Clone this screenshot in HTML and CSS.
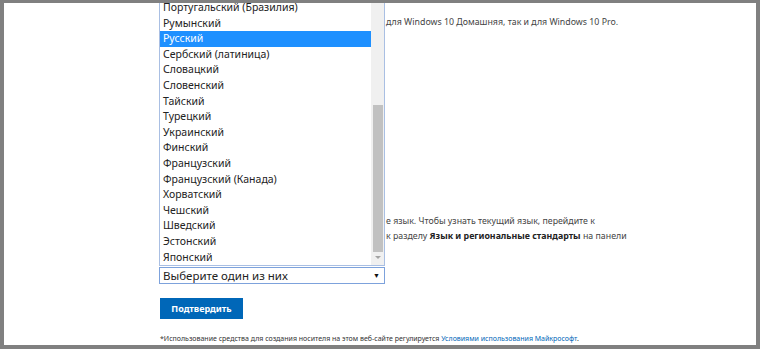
FILE: index.html
```html
<!DOCTYPE html>
<html lang="ru">
<head>
<meta charset="utf-8">
<title>Выбор языка</title>
<link rel="stylesheet" href="styles.css">
</head>
<body>
<div class="page">
  <div class="content">
    <p class="text first">для Windows 10 Домашняя, так и для Windows 10 Pro.</p>
    <p class="text second">е язык. Чтобы узнать текущий язык, перейдите к<br>к разделу <b>Язык и региональные стандарты</b> на панели</p>
    <div class="select">
      <span class="select-value">Выберите один из них</span>
      <span class="select-arrow">▼</span>
    </div>
    <button class="confirm">Подтвердить</button>
    <p class="footer">*Использование средства для создания носителя на этом веб-сайте регулируется <a href="#">Условиями использования Майкрософт</a>.</p>
  </div>

  <div class="listbox">
    <div class="options">
      <div class="option">Португальский (Бразилия)</div>
      <div class="option">Румынский</div>
      <div class="option selected">Русский</div>
      <div class="option">Сербский (латиница)</div>
      <div class="option">Словацкий</div>
      <div class="option">Словенский</div>
      <div class="option">Тайский</div>
      <div class="option">Турецкий</div>
      <div class="option">Украинский</div>
      <div class="option">Финский</div>
      <div class="option">Французский</div>
      <div class="option">Французский (Канада)</div>
      <div class="option">Хорватский</div>
      <div class="option">Чешский</div>
      <div class="option">Шведский</div>
      <div class="option">Эстонский</div>
      <div class="option">Японский</div>
    </div>
    <div class="scrollbar">
      <div class="thumb"></div>
      <div class="down-arrow"></div>
    </div>
  </div>
</div>
</body>
</html>
```

FILE: styles.css
```css
html, body {
  margin: 0;
  padding: 0;
  height: 349px;
  overflow: hidden;
}
body {
  background: #808080;
  padding: 3px 4px 4px 4px;
  box-sizing: border-box;
  font-family: "Noto Sans", "Liberation Sans", sans-serif;
}
.page {
  position: relative;
  background: #ffffff;
  height: 342px;
  overflow: hidden;
}
.content {
  padding-left: 156px;
  display: flex;
  flex-direction: column;
  align-items: flex-start;
}
.text {
  margin: 0;
  padding-left: 226px;
  font-size: 8.8px;
  line-height: 15px;
  color: #444;
  white-space: nowrap;
}
.text b {
  color: #222;
}
.first {
  margin-top: 12px;
}
.second {
  margin-top: 184px;
}
.select {
  margin-top: 23px;
  margin-left: -1px;
  width: 226px;
  height: 17px;
  box-sizing: border-box;
  border: 1px solid #7da2dc;
  display: flex;
  align-items: center;
  justify-content: space-between;
  padding: 0 4px 0 3px;
  font-size: 11.5px;
  color: #222;
}
.select-arrow {
  font-size: 7px;
  color: #111;
}
.confirm {
  margin-top: 14px;
  width: 83px;
  height: 21px;
  border: none;
  background: #0067b8;
  color: #fff;
  font-family: "Noto Sans", "Liberation Sans", sans-serif;
  font-weight: bold;
  font-size: 9px;
  padding: 0;
}
.footer {
  margin: 15px 0 0 0;
  font-size: 7px;
  color: #333;
  white-space: nowrap;
}
.footer a {
  color: #0067b8;
  text-decoration: none;
}
.listbox {
  position: absolute;
  left: 155px;
  top: 0;
  width: 226px;
  height: 263px;
  box-sizing: border-box;
  background: #fff;
  border: 1px solid #a9bfe3;
  border-top: none;
  display: flex;
  overflow: hidden;
}
.options {
  flex: 1;
  margin-top: -3px;
}
.option {
  height: 15.6px;
  line-height: 15.6px;
  padding-left: 3px;
  font-size: 10.5px;
  color: #222;
  white-space: nowrap;
}
.option.selected {
  background: #1e90ff;
  color: #fff;
}
.scrollbar {
  width: 13px;
  background: #f0f0f0;
  display: flex;
  flex-direction: column;
  align-items: center;
  padding-top: 102px;
  box-sizing: border-box;
}
.thumb {
  width: 10px;
  height: 147px;
  background: #c1c1c1;
}
.down-arrow {
  margin-top: 4px;
  width: 0;
  height: 0;
  border-left: 3px solid transparent;
  border-right: 3px solid transparent;
  border-top: 3px solid #a3a3a3;
}
```
